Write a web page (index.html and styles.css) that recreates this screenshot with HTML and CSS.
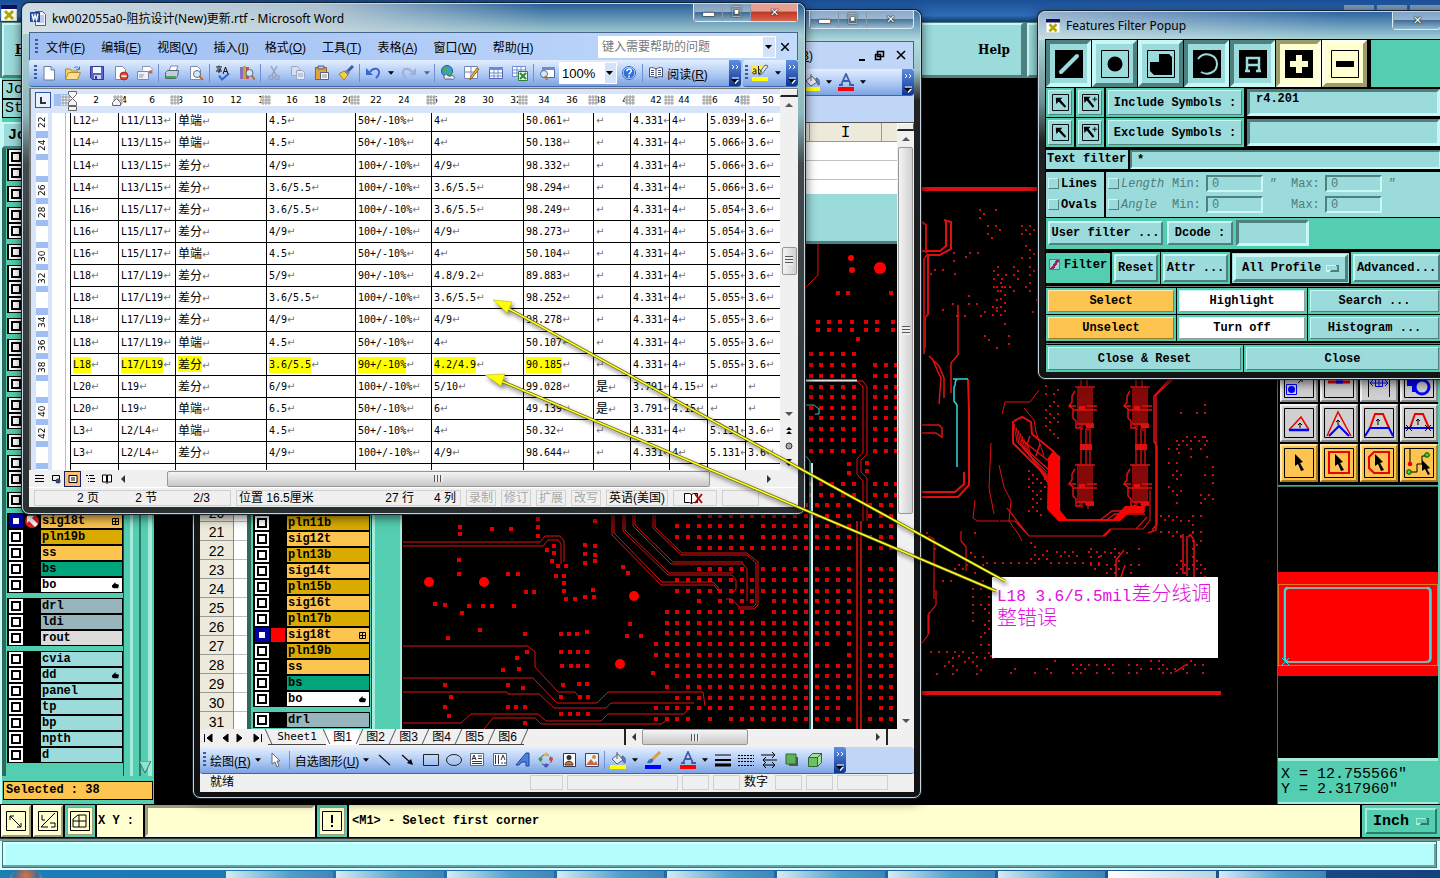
FILE: index.html
```html
<!DOCTYPE html>
<html lang="zh-CN">
<head>
    <meta charset="UTF-8">
    <meta name="viewport" content="width=device-width, initial-scale=1.0">
    <title>kw002055a0-阻抗设计(New)更新.rtf - Microsoft Word</title>
    <link rel="stylesheet" href="styles.css">
</head>
<body>
    <!-- icon sprite -->
    <svg width="0" height="0" class="sprite" aria-hidden="true">
        <symbol id="i-new" viewBox="0 0 16 16"><path d="M3 1.500h7l3.500 3.500v10H3z" fill="#fff" stroke="#6a7c9c"/><path d="M10 1.500V5h3.500" fill="#cdd8ec" stroke="#6a7c9c"/></symbol>
        <symbol id="i-open" viewBox="0 0 16 16"><path d="M.5 14V4h5l1 2h6v3" fill="#f6cf6b" stroke="#b58a26"/><path d="M.5 14.500l3-7h12l-3 7z" fill="#fbdf8d" stroke="#b58a26"/><path d="M9 3c2-2 4-1 5 1m.5-2.500V4.500h-3" fill="none" stroke="#3b6fc4"/></symbol>
        <symbol id="i-save" viewBox="0 0 16 16"><path d="M1.500 1.500h13v13h-11l-2-2z" fill="#5a62c8" stroke="#33398e"/><path d="M4 2h8v6H4z" fill="#f3f5ff"/><path d="M5 10h7v4H5z" fill="#cdd2ee"/><path d="M6 11h2v3H6z" fill="#33398e"/></symbol>
        <symbol id="i-perm" viewBox="0 0 16 16"><path d="M2.500 1.500h7l3 3v10h-10z" fill="#fff" stroke="#7c8aa8"/><circle cx="11" cy="11" r="4" fill="#e2492f" stroke="#a52a18"/><path d="M8.500 10.300h5v1.600h-5z" fill="#fff"/></symbol>
        <symbol id="i-mail" viewBox="0 0 16 16"><path d="M5.500 5V1.500H13l2 2V9" fill="#fff" stroke="#8a96b0"/><path d="M.5 6.500h11v8H.5z" fill="#eef1f8" stroke="#7c8aa8"/><path d="M2 10h5m-5 2h4" stroke="#8a96b0"/><path d="M12 5.500h3v3h-3z" fill="#e05646"/></symbol>
        <symbol id="i-print" viewBox="0 0 16 16"><path d="M5 6l2-5h7l-2 5z" fill="#fff" stroke="#7c8aa8"/><path d="M1.500 7.500l2-2h11l-1 6-2 2h-10z" fill="#c5cddd" stroke="#56617a"/><path d="M2 11h10v2H2z" fill="#38b24a"/></symbol>
        <symbol id="i-preview" viewBox="0 0 16 16"><path d="M2.500 1.500h7l3 3v10h-10z" fill="#fff" stroke="#7c8aa8"/><circle cx="9" cy="9" r="3.500" fill="#d5ebfb" stroke="#5d6c88"/><path d="M11.500 11.500l3.500 3.500" stroke="#b96f2b" stroke-width="2"/></symbol>
        <symbol id="i-spell" viewBox="0 0 16 16"><path d="M1 2h6M4 .5V2M2 4h4L4 5.500V8M1 6h6M8 9l2.500-7L13 9M9 6.500h3" fill="none" stroke="#111"/><path d="M4 10.500l3 4 7-6" fill="none" stroke="#2f68c5" stroke-width="2"/></symbol>
        <symbol id="i-research" viewBox="0 0 16 16"><path d="M1 2h3v12H1z" fill="#8a6cc0"/><path d="M4 1h3v13H4z" fill="#c9a04a"/><path d="M7 2h3v12H7z" fill="#c0564a"/><circle cx="10.500" cy="8" r="3.500" fill="#cfe6fa" stroke="#5d6c88"/><path d="M12.500 10.500L16 15" stroke="#b96f2b" stroke-width="2"/></symbol>
        <symbol id="i-cut" viewBox="0 0 16 16"><path d="M5 1l5 9M11 1L6 10" stroke="#93a3bf" stroke-width="1.500"/><circle cx="5" cy="12.500" r="2" fill="none" stroke="#93a3bf" stroke-width="1.500"/><circle cx="11" cy="12.500" r="2" fill="none" stroke="#93a3bf" stroke-width="1.500"/></symbol>
        <symbol id="i-copy" viewBox="0 0 16 16"><path d="M1.500 1.500h6l2 2v7h-8z" fill="#d5dff0" stroke="#98a8c6"/><path d="M6.500 5.500h6l2 2v7h-8z" fill="#e2e9f6" stroke="#98a8c6"/><path d="M8 9h5m-5 2h5" stroke="#98a8c6"/></symbol>
        <symbol id="i-paste" viewBox="0 0 16 16"><path d="M1.500 2.500h11v12h-11z" fill="#e2a43a" stroke="#8f6518"/><path d="M4 1h6v3H4z" fill="#b9c0cd" stroke="#56617a"/><path d="M6.500 7.500h8v7h-8z" fill="#fff" stroke="#56617a"/><path d="M8 10h5m-5 2h5" stroke="#7c8aa8"/></symbol>
        <symbol id="i-brush" viewBox="0 0 16 16"><path d="M15 1l-6 6" stroke="#3c5ba9" stroke-width="3"/><path d="M1 9l5-3 4 4-4 5z" fill="#f5cd4f" stroke="#a98419"/><path d="M6 6l3-1 3 3-2 2z" fill="#7a8294"/></symbol>
        <symbol id="i-undo" viewBox="0 0 16 16"><path d="M5 7c3-5 10-4 9 1-.3 3-2 4-3 5" fill="none" stroke="#3b66cf" stroke-width="2"/><path d="M1 3v7h7z" fill="#3b66cf"/></symbol>
        <symbol id="i-redo" viewBox="0 0 16 16"><path d="M11 7C8 2 1 3 2 8c.3 3 2 4 3 5" fill="none" stroke="#9fb1d2" stroke-width="2"/><path d="M15 3v7H8z" fill="#9fb1d2"/></symbol>
        <symbol id="i-link" viewBox="0 0 16 16"><circle cx="7" cy="6" r="5.500" fill="#3f9bd8" stroke="#1d5e94"/><path d="M3 3c3-2 5 0 4 2s-2 3-4 2zM8 7c2-1 4 0 3 2s-3 1-3-2z" fill="#46b04a"/><path d="M4 12a2 2 0 014-1h3a2 2 0 110 3H7a2 2 0 01-3-2z" fill="#e8ecf5" stroke="#56617a"/></symbol>
        <symbol id="i-tabpen" viewBox="0 0 16 16"><path d="M.5 1.500h13v12H.5zM7 1v12M0 7h13" fill="#fff" stroke="#7485b2"/><path d="M15 4l-7 9-2 2 .5-3L13 3z" fill="#f0b740" stroke="#8f6518"/></symbol>
        <symbol id="i-table" viewBox="0 0 16 16"><path d="M1.500 2.500h13v11h-13z" fill="#fff" stroke="#4f68ad"/><path d="M1 2h14v3H1z" fill="#6f8bd2"/><path d="M2 8h12M2 11h12M6 3v10M10 3v10" stroke="#6f8bd2"/></symbol>
        <symbol id="i-xls" viewBox="0 0 16 16"><path d="M.5 1.500h13v10H.5zM5 2v9M9 2v9M1 5h12M1 8h12" fill="#fff" stroke="#6f8bd2"/><path d="M6.500 6.500h9v9h-9z" fill="#e9f7e7" stroke="#2f7d36"/><path d="M8 8l6 6M14 8l-6 6" stroke="#2f8d3a" stroke-width="2"/></symbol>
        <symbol id="i-map" viewBox="0 0 16 16"><path d="M3.500 2.500h12v10h-12z" fill="#fff" stroke="#4f68ad"/><path d="M3 2h13v3H3z" fill="#6f8bd2"/><circle cx="5" cy="9" r="3.500" fill="#d5ebfb" stroke="#5d6c88"/><path d="M6 11l2 4" stroke="#b96f2b" stroke-width="2"/></symbol>
        <symbol id="i-help" viewBox="0 0 16 16"><circle cx="8" cy="8" r="6.500" fill="#fff" stroke="#2c62c4"/><circle cx="8" cy="8" r="5.500" fill="#2f6fdb"/><path d="M5.800 6.200c0-3 4.500-3 4.500-.2C10.300 7.600 8 7.600 8 9.500M8 10.800v1.600" fill="none" stroke="#fff" stroke-width="1.500"/></symbol>
        <symbol id="i-book" viewBox="0 0 16 16"><path d="M1.500 3c3-1 5 0 6.500 1 1.500-1 3.500-2 6.500-1v9c-3-1-5 0-6.500 1-1.500-1-3.500-2-6.500-1zM8 4v9" fill="#fff" stroke="#44506c"/><path d="M3 5.500h3M3 7.500h3M3 9.500h3M10 5.500h3M10 7.500h3M10 9.500h3" stroke="#44506c"/></symbol>
        <symbol id="i-doc" viewBox="0 0 16 16"><path d="M5.500 1.500h7l3 3v11h-10z" fill="#eef3fc" stroke="#56617a"/><path d="M8 6h6M8 8h6M8 10h6M8 12h6" stroke="#8fa4cf"/><path d="M.5 2.500h9v9h-9z" fill="#3460b8" stroke="#1b3c83"/><path d="M2 4l1.500 6L5 5l1.500 5L8 4" fill="none" stroke="#fff" stroke-width="1.300"/></symbol>
        <symbol id="i-hilite" viewBox="0 0 18 18"><path d="M1 1h11v9H1z" fill="#ffe94d"/><path d="M17 2l-6 8-3 1 1-3 5-7z" fill="#e8ecf5" stroke="#56617a"/><path d="M2 5.500c1-1 3-1 3 1V10M5 7C1 7 1 10 3 10l2-1M7.500 2v8M7.500 6c3-1.500 4 4 0 4" fill="none" stroke="#222"/><path d="M1 13h16v4H1z" fill="#ffff00"/></symbol>
        <symbol id="i-fill" viewBox="0 0 18 18"><path d="M3 8l6-5 5 6-6 4z" fill="#e8ecf5" stroke="#56617a"/><path d="M8 1v7M13 5c3 0 4 4 3 7-2 0-2-3-3-5z" fill="#4f82cf" stroke="#56617a"/><path d="M1 14h16v4H1z" fill="#ffff00"/></symbol>
        <symbol id="i-pen" viewBox="0 0 18 18"><path d="M16 1l-8 8" stroke="#dba03d" stroke-width="3"/><path d="M3 12c1-4 4-5 6-4 1 3-2 5-6 4z" fill="#3f6dc4"/><path d="M1 14h16v4H1z" fill="#0000ff"/></symbol>
        <symbol id="i-color" viewBox="0 0 18 18"><path d="M4 12L9 1l5 11M6 8h6M2 12h4M12 12h5" fill="none" stroke="#3d5ea8" stroke-width="1.800"/><path d="M1 14h16v4H1z" fill="#ff0000"/></symbol>
        <symbol id="i-caret" viewBox="0 0 7 4"><path d="M0 0h7L3.500 4z"/></symbol>
        <symbol id="i-cap" viewBox="0 0 12 26"><path d="M3 5l2 2-2 2M7 5l2 2-2 2" fill="none" stroke="#fff"/><path d="M3 18h7" stroke="#fff"/><path d="M3 20h7l-3.500 4z" fill="#fff"/><path d="M2 19h7l-3.500 4z" fill="#000"/></symbol>
        <symbol id="i-x11" viewBox="0 0 16 16"><path d="M0 0h16v16H0z" fill="#ddd"/><path d="M1 2h14v13H1z" fill="#fff"/><path d="M0 0h16v4H0z" fill="#101060"/><path d="M4 6l8 8M12 6l-8 8" stroke="#b0a800" stroke-width="3"/></symbol>
        <symbol id="i-arrow" viewBox="0 0 18 18"><path d="M.5.500h17v17H.5z" fill="none" stroke="#000"/><path d="M4 4h7L9 6l6 7-1.500 1.500L7 8l-2.500 2.500z"/></symbol>
        <symbol id="i-arrowplus" viewBox="0 0 18 18"><path d="M.5.500h17v17H.5z" fill="none" stroke="#000"/><path d="M2 3h7L7 5l6 8-1.500 1.500L5 7l-2.500 2.500z"/><path d="M13.500 3v5M11 5.500h5" stroke="#000"/></symbol>
        <symbol id="i-hash" viewBox="0 0 10 10"><path d="M0 0h10v10H0z" fill="#fff" fill-opacity=".8"/><path d="M2 0v10M5 0v10M8 0v10M0 2h10M0 5h10M0 8h10" stroke="#999"/></symbol>
        <symbol id="i-hand" viewBox="0 0 8 8"><path d="M0 4l4-4v2l4 1-1 4H2L0 6z"/></symbol>
        <symbol id="i-plusbox" viewBox="0 0 7 7"><path d="M.5.500h6v6h-6zM3.500 1v5M1 3.500h5" fill="none" stroke="#000"/></symbol>
    </svg>

    <div class="desktop">
        <!-- CAM application -->
        <div class="cam">
            <header class="cam-title">
                <svg class="cam-icon"><use href="#i-x11"/></svg>
                <span class="ghost-btns"><i></i><i></i><i></i></span>
            </header>
            <nav class="cam-menu">
                <button class="menu-file"><u>F</u>ile</button>
                <button class="menu-help">Help</button>
                <div class="menu-clock"></div>
            </nav>
            <main class="cam-main">
                <aside class="layers-panel">
                    <div class="job-fields">
                        <span>Jo</span><span>St</span>
                        <button class="bevel">Jo</button>
                    </div>
                    <div class="layers-body">
                        <div class="layers" id="layers"></div>
                        <div class="cam-scroll"><svg viewBox="0 0 12 12"><path d="M0 0h12L6 12z" fill="#8fe3d0" stroke="#2d7a68"/></svg></div>
                    </div>
                    <div class="selected">Selected : 38</div>
                </aside>
                <section class="canvas"><svg id="board" width="1123" height="727" viewBox="154 78 1123 727"></svg></section>
                <aside class="tools-panel">
                    <div class="tools">
                        <button><svg viewBox="0 0 30 30"><path d="M.5.500h29v29H.5z" fill="none" stroke="#000"/><path d="M2.500 16.500h10v10h-10z" fill="none" stroke="#00f"/><circle cx="7.500" cy="21.500" r="3.500" fill="#00f"/><path d="M14 15l4-4m-3 0h3v3" fill="none" stroke="#000"/></svg></button>
                        <button><svg viewBox="0 0 30 30"><path d="M.5.500h29v29H.5z" fill="none" stroke="#000"/><path d="M4 14h22" stroke="#e00" stroke-width="3"/><path d="M12 14h7" stroke="#00f" stroke-width="3"/></svg></button>
                        <button><svg viewBox="0 0 30 30"><path d="M4.500 29V8M25.500 29V8" stroke="#000"/><path d="M6 15h18M9 12l-3 3 3 3M21 12l3 3-3 3M11.500 11.500h7v7h-7zM15 11v8" fill="none" stroke="#00f"/></svg></button>
                        <button><svg viewBox="0 0 30 30"><path d="M.5.500h29v29H.5z" fill="none" stroke="#000"/><path d="M3 10h14v14H8V18H3z" fill="#00f"/><circle cx="18" cy="19" r="7" fill="#d0d0d0" stroke="#00f" stroke-width="3"/></svg></button>
                        <button><svg viewBox="0 0 30 30"><path d="M.5.500h29v29H.5z" fill="none" stroke="#000"/><path d="M5 22L17 9l8 13" fill="none" stroke="#e00" stroke-width="1.500"/><path d="M5 22h20" stroke="#00f" stroke-width="2.500"/><path d="M16 20v-5m-2 2l2-2 2 2" fill="none" stroke="#000"/></svg></button>
                        <button><svg viewBox="0 0 30 30"><path d="M.5.500h29v29H.5z" fill="none" stroke="#000"/><path d="M3 28L14 4l13 24" fill="none" stroke="#e00" stroke-width="1.500"/><path d="M5 28l10-10 10 10" fill="none" stroke="#00f" stroke-width="2"/><path d="M14 17v-5m-2 2l2-2 2 2" fill="none" stroke="#000"/></svg></button>
                        <button><svg viewBox="0 0 30 30"><path d="M.5.500h29v29H.5z" fill="none" stroke="#000"/><path d="M6 20l5-14h8l6 14" fill="none" stroke="#e00" stroke-width="2"/><path d="M1 28l5-8h19l4 8" fill="none" stroke="#00f" stroke-width="2"/><path d="M14 17v-6m-2 2l2-2 2 2" fill="none" stroke="#000"/></svg></button>
                        <button><svg viewBox="0 0 30 30"><path d="M.5.500h29v29H.5z" fill="none" stroke="#000"/><path d="M6 20l5-14h8l6 14" fill="none" stroke="#e00" stroke-width="2"/><path d="M1 20h28" stroke="#00f" stroke-width="2"/><path d="M14 17v-6m-2 2l2-2 2 2M2 17l6 6m0-6l-6 6M21 17l6 6m0-6l-6 6" fill="none" stroke="#000"/></svg></button>
                        <button class="amber"><svg viewBox="0 0 30 30"><path d="M.5.500h29v29H.5z" fill="none" stroke="#000"/><path d="M11 6l8 8-3 1 4 7-3 1-3-7-3 2z"/></svg></button>
                        <button class="amber"><svg viewBox="0 0 30 30"><path d="M.5.500h29v29H.5z" fill="none" stroke="#000"/><path d="M5 4h20v21H5z" fill="none" stroke="#e00" stroke-width="2"/><path d="M11 6l8 8-3 1 4 7-3 1-3-7-3 2z"/></svg></button>
                        <button class="amber"><svg viewBox="0 0 30 30"><path d="M.5.500h29v29H.5z" fill="none" stroke="#000"/><path d="M10 4h15v21H10l-5-5V9z" fill="none" stroke="#e00" stroke-width="2"/><path d="M11 6l8 8-3 1 4 7-3 1-3-7-3 2z"/></svg></button>
                        <button class="amber"><svg viewBox="0 0 30 30"><path d="M.5.500h29v29H.5z" fill="none" stroke="#000"/><path d="M6 1v14M6 24h7v-8h5V8h5" fill="none" stroke="#000"/><circle cx="6" cy="16" r="2.300" fill="#e00"/><circle cx="5" cy="24" r="2.300" fill="#3d3" stroke="#040"/><circle cx="23" cy="7" r="2.300" fill="#3d3" stroke="#040"/><path d="M18 12l8 8-3 1 3 5-2 1-3-6-3 2z"/></svg></button>
                    </div>
                    <div class="overview">
                        <svg width="160" height="104" viewBox="0 0 160 104">
                            <path d="M0 0h160v104H0z" fill="#f00"/>
                            <path d="M1 12.500h158M1 93.500h158M.5 12v82M159.500 12v82" stroke="#e07820"/>
                            <rect x="7" y="16" width="145" height="74" rx="4" fill="none" stroke="#9aa" stroke-width="2"/>
                            <path d="M10 15.500q-3.500 0-3.500 4V86q0 4 3.500 4M149 15.500q4 0 4 4V86q0 4-4 4" fill="none" stroke="#2be0e6" stroke-width="1.500"/>
                            <path d="M4 86l7 7m0-7l-7 7" stroke="#2be0e6"/>
                        </svg>
                    </div>
                    <output class="coords">X = 12.755566"<br>Y = 2.317960"</output>
                </aside>
            </main>
            <section class="command">
                <button class="cmd"><svg viewBox="0 0 20 20"><path d="M.5.500h19v19H.5zM4 5l11 11M4 9V5h4M15 12v4h-4" fill="none" stroke="#000"/></svg></button>
                <button class="cmd"><svg viewBox="0 0 20 20"><path d="M.5.500h19v19H.5zM17 2L3 16h7M4 4v5h3M12 12h5v4h-4" fill="none" stroke="#000"/></svg></button>
                <button class="cmd green"><svg viewBox="0 0 20 20"><path d="M.5.500h19v19H.5zM3 16V8l5-4h8v12zM9 4v12M3 10h13" fill="none" stroke="#000"/></svg></button>
                <label class="xy" for="xy">X Y :</label>
                <input id="xy" class="xy-input" type="text">
                <button class="cmd green"><svg viewBox="0 0 20 20"><path d="M.5.500h19v19H.5z" fill="none" stroke="#000"/><path d="M10 4v8M10 14v2" stroke="#000" stroke-width="2"/></svg></button>
                <p class="prompt">&lt;M1&gt; - Select first corner</p>
                <div class="unit">
                    <select aria-label="Unit"><option>Inch</option><option>MM</option></select>
                </div>
            </section>
            <div class="message"><input type="text" aria-label="Message"></div>
            <footer class="taskbar">
                <i class="orb"></i>
                <span></span><span></span><span></span><span></span><span></span><span></span><span></span><span></span><span class="lit"></span><span></span>
            </footer>
        </div>

        <!-- Excel -->
        <section class="window excel">
            <div class="win-title">
                <div class="win-btns"><button aria-label="Minimize">▬</button><button aria-label="Maximize">▣</button><button aria-label="Close">✕</button></div>
            </div>
            <div class="client">
                <div class="xl-menu">
                    <button>Adobe PDF(<u>B</u>)</button>
                    <svg width="52" height="12" viewBox="0 0 52 12"><path d="M2 10h6" stroke="#000" stroke-width="2"/><path d="M20.500 1.500h6v5h-6zM18.500 4.500h5v5h-5z" fill="#c0d6f6" stroke="#000" stroke-width="1.500"/><path d="M40 1l8 8M48 1l-8 8" stroke="#000" stroke-width="1.600"/></svg>
                </div>
                <div class="xl-bar">
                    <button><svg class="i18"><use href="#i-fill"/></svg></button><button class="drop"><svg><use href="#i-caret"/></svg></button>
                    <button><svg class="i18"><use href="#i-color"/></svg></button><button class="drop"><svg><use href="#i-caret"/></svg></button>
                    <svg class="cap"><use href="#i-cap"/></svg>
                </div>
                <div class="xl-blank"></div>
                <div class="xl-body">
                    <div class="sheet">
                        <div class="colhead"><span></span><span>I</span><span></span></div>
                        <div class="sheet-row">
                            <div class="rowheads" id="rowheads"></div>
                            <div class="sheet-gap"></div>
                            <div class="shot">
                                <div class="shot-top"></div>
                                <div class="shot-main">
                                    <div class="layers mini" id="layersMini"></div>
                                    <div class="shot-side"></div>
                                    <svg id="closeup" viewBox="402 243 495 485" preserveAspectRatio="xMinYMin slice"></svg>
                                </div>
                            </div>
                        </div>
                    </div>
                    <div class="vscroll">
                        <i class="split"></i>
                        <svg viewBox="0 0 16 16"><path d="M4 10h8L8 6z" fill="#555"/></svg>
                        <div class="thumb"><b></b></div>
                        <div class="track"></div>
                        <svg viewBox="0 0 16 16"><path d="M4 6h8l-4 4z" fill="#555"/></svg>
                    </div>
                </div>
                <div class="tabs">
                    <svg width="66" height="15" viewBox="0 0 66 15"><path d="M2.500 4v8M10 4v8L5 8zM26 4v8l-5-4zM35 4v8l5-4zM52 4v8l5-4zM59.500 4v8" stroke="#000" stroke-width="1"/></svg>
                    <button>Sheet1</button><button class="on">图1</button><button>图2</button><button>图3</button><button>图4</button><button>图5</button><button>图6</button><i class="tab-end"></i>
                    <div class="hscroll">
                        <svg viewBox="0 0 16 16"><path d="M10 4v8L6 8z" fill="#333"/></svg>
                        <div class="thumb"><b></b></div>
                        <svg class="end" viewBox="0 0 16 16"><path d="M6 4v8l4-4z" fill="#333"/></svg>
                    </div>
                </div>
                <div class="draw-bar">
                    <i class="grip"></i>
                    <button class="txt"><span>绘图(<u>R</u>)</span> <svg><use href="#i-caret"/></svg></button>
                    <button><svg viewBox="0 0 16 16"><path d="M4 1l8 8H9l2 5-2 1-2-5-3 2z" fill="#fff" stroke="#667"/></svg></button>
                    <i class="sep"></i>
                    <button class="txt"><span>自选图形(<u>U</u>)</span> <svg><use href="#i-caret"/></svg></button>
                    <button><svg viewBox="0 0 16 16"><path d="M2 3l11 10" stroke="#111" stroke-width="1.300"/></svg></button>
                    <button><svg viewBox="0 0 16 16"><path d="M2 3l9 8" stroke="#111" stroke-width="1.300"/><path d="M13 13l-6-2 4-4z"/></svg></button>
                    <button><svg viewBox="0 0 16 16"><path d="M.5 2.500h15v11H.5z" fill="none" stroke="#222"/></svg></button>
                    <button><svg viewBox="0 0 16 16"><ellipse cx="8" cy="8" rx="7.500" ry="5.500" fill="none" stroke="#222"/></svg></button>
                    <button><svg viewBox="0 0 16 16"><path d="M1.500 1.500h13v12h-13z" fill="#fff" stroke="#667"/><path d="M3 8l2-5 2 5M3.500 6.500h3M9 4h4M9 6.500h4M3 9.500h10M3 11.500h10" fill="none" stroke="#334"/></svg></button>
                    <button><svg viewBox="0 0 16 16"><path d="M1.500 1.500h13v12h-13z" fill="#fff" stroke="#667"/><path d="M9 8l2-5 2 5M3.500 3v9M6.500 3v9M10 10v2M13 10v2" fill="none" stroke="#334"/></svg></button>
                    <button><svg viewBox="0 0 16 16"><path d="M1 13L11 1h3v13h-3v-4H7l-3 3z" fill="#4d7fe0" stroke="#1c449c"/></svg></button>
                    <button><svg viewBox="0 0 16 16"><circle cx="8" cy="8" r="5.500" fill="none" stroke="#444" stroke-dasharray="3 2"/><circle cx="8" cy="2.500" r="2" fill="#e6b23c"/><circle cx="13" cy="7" r="2" fill="#d0483a"/><circle cx="8" cy="13.500" r="2" fill="#4a52c8"/><circle cx="2.500" cy="7" r="2" fill="#3e9a48"/></svg></button>
                    <button><svg viewBox="0 0 16 16"><path d="M2.500 1.500h12v13h-12z" fill="#fff" stroke="#335"/><circle cx="8" cy="5.500" r="2.500" fill="#333"/><path d="M4 13c0-5 8-5 8 0z" fill="#d87530" stroke="#333"/></svg></button>
                    <button><svg viewBox="0 0 16 16"><path d="M1.500 1.500h13v13h-13z" fill="#eaf2ff" stroke="#446"/><circle cx="10" cy="5" r="2" fill="#e08a2e"/><path d="M2 13l5-6 3 4 2-2 2 4z" fill="#c26a4b"/></svg></button>
                    <i class="sep"></i>
                    <button><svg class="i18"><use href="#i-fill"/></svg></button><button class="drop"><svg><use href="#i-caret"/></svg></button>
                    <button><svg class="i18"><use href="#i-pen"/></svg></button><button class="drop"><svg><use href="#i-caret"/></svg></button>
                    <button><svg class="i18"><use href="#i-color"/></svg></button><button class="drop"><svg><use href="#i-caret"/></svg></button>
                    <button><svg viewBox="0 0 16 16"><path d="M0 3h16" stroke="#000"/><path d="M0 8h16" stroke="#000" stroke-width="2"/><path d="M0 13h16" stroke="#000" stroke-width="3"/></svg></button>
                    <button><svg viewBox="0 0 16 16"><path d="M0 3.500h16M0 6.500h16M0 9.500h16M0 13.500h16" stroke="#000" stroke-dasharray="2 1"/></svg></button>
                    <button><svg viewBox="0 0 16 16"><path d="M0 3h14M11 0l3 3-3 3M2 8h14M5 5L2 8l3 3M2 13h12M11 10l3 3-3 3M5 10l-3 3 3 3" fill="none" stroke="#000"/></svg></button>
                    <button><svg viewBox="0 0 16 16"><path d="M5 5h9v9H5z" fill="#555"/><path d="M2 2h10v10H2z" fill="#5cb35a" stroke="#2d6c2d"/></svg></button>
                    <button><svg viewBox="0 0 16 16"><path d="M1.500 5.500h9v9h-9z" fill="#6cc067" stroke="#2d6c2d"/><path d="M1.500 5.500l4-4h9l-4 4zM10.500 14.500l4-4v-9l-4 4z" fill="#a4dd9c" stroke="#2d6c2d"/></svg></button>
                    <svg class="cap"><use href="#i-cap"/></svg>
                </div>
                <div class="xl-status">
                    <span class="ready">就绪</span>
                    <i class="w33"></i><i class="w110"></i><i></i><i></i><span class="num">数字</span><i></i><i></i><i class="w50"></i>
                </div>
            </div>
        </section>

        <!-- Word -->
        <section class="window word">
            <div class="win-title">
                <svg class="i16"><use href="#i-doc"/></svg>
                <h1>kw002055a0-阻抗设计(New)更新.rtf - Microsoft Word</h1>
                <div class="win-btns"><button aria-label="Minimize">▬</button><button aria-label="Maximize">▣</button><button class="red" aria-label="Close">✕</button></div>
            </div>
            <div class="client">
                <nav class="menu">
                    <i class="grip"></i>
                    <button>文件(<u>F</u>)</button><button>编辑(<u>E</u>)</button><button>视图(<u>V</u>)</button><button>插入(<u>I</u>)</button><button>格式(<u>O</u>)</button><button>工具(<u>T</u>)</button><button>表格(<u>A</u>)</button><button>窗口(<u>W</u>)</button><button>帮助(<u>H</u>)</button>
                    <div class="ask"><input type="text" placeholder="键入需要帮助的问题" aria-label="键入需要帮助的问题"><svg><use href="#i-caret"/></svg></div>
                    <button class="close-doc" aria-label="关闭"><svg width="8" height="8" viewBox="0 0 8 8"><path d="M0 0l8 8M8 0L0 8" stroke="#000" stroke-width="1.500"/></svg></button>
                </nav>
                <div class="bars">
                    <div class="bar">
                        <i class="grip"></i>
                        <button><svg><use href="#i-new"/></svg></button><button><svg><use href="#i-open"/></svg></button><button><svg><use href="#i-save"/></svg></button><button><svg><use href="#i-perm"/></svg></button><button><svg><use href="#i-mail"/></svg></button>
                        <i class="sep"></i>
                        <button><svg><use href="#i-print"/></svg></button><button><svg><use href="#i-preview"/></svg></button>
                        <i class="sep"></i>
                        <button><svg><use href="#i-spell"/></svg></button><button><svg><use href="#i-research"/></svg></button>
                        <i class="sep"></i>
                        <button><svg><use href="#i-cut"/></svg></button><button><svg><use href="#i-copy"/></svg></button><button><svg><use href="#i-paste"/></svg></button><button><svg><use href="#i-brush"/></svg></button>
                        <i class="sep"></i>
                        <button><svg><use href="#i-undo"/></svg></button><button class="drop"><svg><use href="#i-caret"/></svg></button><button><svg><use href="#i-redo"/></svg></button><button class="drop off"><svg><use href="#i-caret"/></svg></button>
                        <i class="sep"></i>
                        <button><svg><use href="#i-link"/></svg></button><button><svg><use href="#i-tabpen"/></svg></button><button><svg><use href="#i-table"/></svg></button><button><svg><use href="#i-xls"/></svg></button>
                        <i class="sep"></i>
                        <button><svg><use href="#i-map"/></svg></button>
                        <div class="zoom"><input type="text" value="100%" aria-label="显示比例"><svg><use href="#i-caret"/></svg></div>
                        <button><svg><use href="#i-help"/></svg></button>
                        <i class="sep"></i>
                        <button class="read"><svg><use href="#i-book"/></svg><span>阅读(<u>R</u>)</span></button>
                        <svg class="cap"><use href="#i-cap"/></svg>
                    </div>
                    <div class="bar small">
                        <i class="grip"></i>
                        <button><svg class="i18"><use href="#i-hilite"/></svg></button><button class="drop"><svg><use href="#i-caret"/></svg></button>
                        <svg class="cap"><use href="#i-cap"/></svg>
                    </div>
                </div>
                <div class="doc">
                    <div class="page">
                        <div class="hruler">
                            <button class="tabstop" aria-label="Tab"><svg width="14" height="14" viewBox="0 0 14 14"><path d="M5 4v6h5" fill="none" stroke="#333" stroke-width="2"/></svg></button>
                            <div class="hnums" id="hnums"></div>
                            <svg class="marks" id="marks" width="726" height="22" viewBox="52 90 726 22"></svg>
                        </div>
                        <div class="paper-row">
                            <div class="vruler" id="vruler"></div>
                            <div class="paper">
                                <table class="stack">
                                    <colgroup><col class="c48"><col class="c57"><col class="c91"><col class="c89"><col class="c76"><col class="c92"><col class="c70"><col class="c37"><col class="c39"><col class="c38"><col class="c38"><col></colgroup>
                                    <tbody id="rows"></tbody>
                                </table>
                            </div>
                        </div>
                    </div>
                    <div class="vscroll">
                        <i class="split"></i>
                        <svg viewBox="0 0 16 16"><path d="M4 10h8L8 6z" fill="#555"/></svg>
                        <div class="track"></div>
                        <div class="thumb"><b></b></div>
                        <div class="track rest"></div>
                        <svg viewBox="0 0 16 16"><path d="M4 6h8l-4 4z" fill="#555"/></svg>
                        <svg viewBox="0 0 16 16"><path d="M5 8l3-3 3 3zM5 12l3-3 3 3z"/></svg>
                        <svg viewBox="0 0 16 16"><circle cx="8" cy="8" r="3" fill="#aaa" stroke="#333"/></svg>
                        <svg viewBox="0 0 16 16"><path d="M5 5h6L8 8zM5 9h6l-3 3z"/></svg>
                    </div>
                </div>
                <div class="views">
                    <button><svg viewBox="0 0 12 12"><path d="M2 2.500h9M2 5.500h9M2 8.500h9" stroke="#000"/></svg></button>
                    <button><svg viewBox="0 0 12 12"><path d="M2.500 2.500h7v5h-7z" fill="none" stroke="#000"/><circle cx="8" cy="8" r="2.500" fill="#347"/></svg></button>
                    <button class="on"><svg viewBox="0 0 12 12"><path d="M2 2.500h8v7H2zM4 5h4M4 7h4" fill="#fff" stroke="#000"/></svg></button>
                    <button><svg viewBox="0 0 12 12"><path d="M2 2.500h2M5 2.500h5M4 5.500h1M6 5.500h5M4 8.500h1M6 8.500h5" stroke="#000"/></svg></button>
                    <button><svg viewBox="0 0 12 12"><path d="M1.500 2h4v7h-4zM6.500 2h4v7h-4zM6 9v2" fill="#fff" stroke="#000"/></svg></button>
                    <div class="hscroll">
                        <svg viewBox="0 0 16 16"><path d="M10 4v8L6 8z" fill="#333"/></svg>
                        <div class="thumb"><b></b></div>
                        <svg class="end" viewBox="0 0 16 16"><path d="M6 4v8l4-4z" fill="#333"/></svg>
                    </div>
                </div>
                <div class="w-status">
                    <div class="cell a"><span>2 页</span><span>2 节</span><span>2/3</span></div>
                    <div class="cell b"><span>位置 16.5厘米</span><span>27 行</span><span>4 列</span></div>
                    <div class="cell off">录制</div><div class="cell off">修订</div><div class="cell off">扩展</div><div class="cell off">改写</div>
                    <div class="cell">英语(美国)</div>
                    <div class="cell book"><svg width="20" height="12" viewBox="0 0 20 12"><path d="M.5 1.500h5l2 1 2-1h4v9h-4l-2 1-2-1h-5zM7.500 2v9" fill="#fff" stroke="#000"/><path d="M11 2l7 9M18 2l-7 9" stroke="#a11" stroke-width="2"/></svg></div>
                    <div class="cell empty"></div>
                </div>
            </div>
        </section>

        <!-- features filter -->
        <section class="window popup">
            <div class="win-title">
                <svg class="i16"><use href="#i-x11"/></svg>
                <h2>Features Filter Popup</h2>
                <div class="win-btns"><button aria-label="Close">✕</button></div>
            </div>
            <form class="client filter">
                <div class="types">
                    <button type="button" class="in"><svg viewBox="0 0 28 28"><path d="M0 0h28v28H0z"/><path d="M6 22L22 6" stroke="#9bdbdb" stroke-width="4" stroke-linecap="round"/></svg></button>
                    <button type="button"><svg viewBox="0 0 28 28"><path d="M.5.500h27v27H.5z" fill="none" stroke="#000"/><circle cx="14" cy="14" r="7.500"/></svg></button>
                    <button type="button"><svg viewBox="0 0 28 28"><path d="M.5.500h27v27H.5z" fill="none" stroke="#000"/><path d="M3 12h9V4h10l3 3v18H7l-4-4z"/></svg></button>
                    <button type="button" class="in"><svg viewBox="0 0 28 28"><path d="M0 0h28v28H0z"/><path d="M5 9C11 1 24 4 24 14c0 8-9 12-16 8" fill="none" stroke="#9bdbdb" stroke-width="2"/></svg></button>
                    <button type="button" class="in"><svg viewBox="0 0 28 28"><path d="M0 0h28v28H0z"/><path d="M8 22V8h12v14M8 15h12M6 21h5M17 21h5" fill="none" stroke="#9bdbdb" stroke-width="2.500"/></svg></button>
                    <button type="button" class="in cream"><svg viewBox="0 0 28 28"><path d="M0 0h28v28H0z"/><path d="M14 5v18M5 14h18" stroke="#ffffd0" stroke-width="6"/></svg></button>
                    <button type="button" class="cream"><svg viewBox="0 0 28 28"><path d="M.5.500h27v27H.5z" fill="none" stroke="#000"/><path d="M5 14h18" stroke="#000" stroke-width="6"/></svg></button>
                </div>
                <div class="sym">
                    <button type="button" class="pick"><svg><use href="#i-arrow"/></svg></button>
                    <button type="button" class="pick"><svg><use href="#i-arrowplus"/></svg></button>
                    <button type="button" class="symbtn">Include Symbols :</button>
                    <input type="text" aria-label="Include Symbols" value="r4.201">
                </div>
                <div class="sym">
                    <button type="button" class="pick"><svg><use href="#i-arrow"/></svg></button>
                    <button type="button" class="pick"><svg><use href="#i-arrowplus"/></svg></button>
                    <button type="button" class="symbtn">Exclude Symbols :</button>
                    <input type="text" aria-label="Exclude Symbols">
                </div>
                <div class="textfilter"><label for="tf">Text filter</label><input id="tf" type="text" value="*"></div>
                <div class="geom">
                    <div class="kinds">
                        <label><input type="checkbox">Lines</label>
                        <label><input type="checkbox">Ovals</label>
                    </div>
                    <div class="limits">
                        <label class="nm"><input type="checkbox" disabled>Length</label><label for="l1">Min:</label><input id="l1" type="text" value="0" disabled><em>"</em><label for="l2">Max:</label><input id="l2" type="text" value="0" disabled><em>"</em>
                        <label class="nm"><input type="checkbox" disabled>Angle</label><label for="a1">Min:</label><input id="a1" type="text" value="0" disabled><em></em><label for="a2">Max:</label><input id="a2" type="text" value="0" disabled><em></em>
                    </div>
                </div>
                <div class="user"><button type="button">User filter ...</button><button type="button" id="dc">Dcode :</button><input type="text" aria-label="Dcode"></div>
                <div class="profile">
                    <label class="flt"><input type="checkbox" checked>Filter</label>
                    <button type="button">Reset</button><button type="button">Attr ...</button>
                    <div class="sel"><select aria-label="Profile"><option>All Profile</option></select></div>
                    <button type="button" class="grow">Advanced...</button>
                </div>
                <div class="acts">
                    <button type="button" class="amber">Select</button><button type="button" class="white">Highlight</button><button type="button">Search ...</button>
                    <button type="button" class="amber">Unselect</button><button type="button" class="white">Turn off</button><button type="button">Histogram ...</button>
                </div>
                <div class="closes"><button type="button">Close &amp; Reset</button><button type="button">Close</button></div>
            </form>
        </section>

        <!-- callout -->
        <p class="note">L18 3.6/5.5mil<span>差分线调整错误</span></p>
        <svg class="callouts" width="1440" height="878" viewBox="0 0 1440 878">
            <g class="cast">
                <path d="M1005 581L500 304M996 591L494 378" stroke="#5f5f14" stroke-width="3"/>
                <path d="M1005 581L500 304M996 591L494 378" stroke="#ffff20" stroke-width="1.600"/>
                <path d="M493 300l19 2-5 11zM485 375l20-1-4 12z" fill="#ffff00" stroke="#b0b000" stroke-width=".5"/>
            </g>
        </svg>
    </div>
    <script src="script.js"></script>
</body>
</html>
```
FILE: styles.css
```css
* {
    margin: 0;
    padding: 0;
    box-sizing: border-box;
}

body {
    font-family: "Liberation Sans", "Noto Sans CJK SC", sans-serif;
    font-size: 12px;
    background: #000;
    overflow: hidden;
}

button, input, select {
    font: inherit;
    color: inherit;
    background: none;
    border: 0;
    border-radius: 0;
    outline: 0;
    appearance: none;
}

svg {
    display: block;
    flex: none;
}

.sprite {
    position: absolute;
}

.desktop {
    position: relative;
    height: 100vh;
    overflow: hidden;
}

/* CAM application */
.cam {
    height: 100%;
    display: flex;
    flex-direction: column;
    font-family: "Liberation Mono", "Noto Sans CJK SC", monospace;
    font-weight: bold;
}

.cam-title {
    height: 22px;
    flex: none;
    display: flex;
    justify-content: space-between;
    padding: 5px 0 0 1px;
    background: linear-gradient(#1b4f96, #2e6cb5 70%, #123a6c);
}

.cam-icon {
    width: 15px;
    height: 14px;
}

.ghost-btns {
    display: flex;
    gap: 3px;
}

.ghost-btns i {
    width: 30px;
    height: 10px;
    background: #7d97b5;
}

.cam-menu {
    height: 56px;
    flex: none;
    display: flex;
    background: #4f8080;
    gap: 4px;
    padding: 1px 0 1px 2px;
    font-family: "DejaVu Serif", serif;
}

.cam-menu > * {
    background: #9bdbdb;
    border: 2px solid;
    border-color: #c8f8f5 #4f8080 #4f8080 #c8f8f5;
}

.menu-file {
    width: 150px;
    text-align: left;
    padding-left: 11px;
}

.menu-help {
    flex: 1;
    text-align: right;
    padding-right: 11px;
}

.menu-clock {
    width: 413px;
}

.cam-main {
    flex: 1;
    min-height: 0;
    display: flex;
}

.layers-panel {
    width: 154px;
    display: flex;
    flex-direction: column;
    background: #54ceb0;
    border-left: 2px solid #c8f8f5;
}

.job-fields {
    height: 71px;
    flex: none;
    display: flex;
    flex-direction: column;
    padding-top: 2px;
    border-bottom: 1px solid #2d7a68;
}

.job-fields span {
    height: 19px;
    padding-left: 2px;
    font-size: 15px;
    line-height: 17px;
    background: #9bdbdb;
    border: 1px solid #000;
    font-weight: normal;
}

.job-fields button {
    margin-top: 4px;
    height: 26px;
    font-size: 15px;
    text-align: left;
    padding-left: 4px;
    background: #9bdbdb;
    border: 2px solid;
    border-color: #c8f8f5 #4f8080 #4f8080 #c8f8f5;
}

.layers-body {
    flex: 1;
    min-height: 0;
    display: flex;
    gap: 3px;
}

.layers {
    width: 122px;
    padding-left: 5px;
    display: flex;
    flex-direction: column;
    gap: 5px;
    background: linear-gradient(90deg, #2d6a5b 4px, #54ceb0 4px);
    border-right: 1px solid #1d4a3f;
}

.layer-group {
    background: #000;
    padding-right: 1px;
}

.layer {
    height: 16px;
    display: flex;
    align-items: center;
    padding-left: 2px;
}

.layer input {
    width: 14px;
    height: 14px;
    background: #fff;
    border: 2px solid #fff;
    box-shadow: inset 0 0 0 2px #000;
}

.layer input:checked {
    border-color: #0000a8;
    box-shadow: inset 0 0 0 2px #0000a8;
}

.layer .swatch {
    width: 14px;
    height: 14px;
    margin: 0 2px;
}

.layer .swatch svg {
    width: 14px;
    height: 14px;
}

.layer label {
    flex: 1;
    height: 14px;
    display: flex;
    align-items: center;
    justify-content: space-between;
    padding: 0 3px 0 1px;
    line-height: 14px;
}

.layer label svg {
    width: 7px;
    height: 7px;
}

.sig { background: #fdc54f; }
.pln { background: #d9aa00; }
.bs { background: #00a57c; }
.wht { background: #fff; }
.drl { background: #98b4bc; }
.gry { background: #dcdcdc; }
.aqua { background: #9bdbdb; }

.cam-scroll {
    flex: 1;
    display: flex;
    align-items: flex-end;
    padding-bottom: 3px;
    margin-left: 3px;
    margin-right: 2px;
    background: linear-gradient(90deg, #a5ecdc 3px, #54ceb0 3px 9px, #2d7a68 9px 11px, #54ceb0 11px 18px, #a5ecdc 18px);
}

.cam-scroll svg {
    width: 12px;
    height: 12px;
    margin-left: 9px;
}

.selected {
    height: 19px;
    flex: none;
    margin: 5px 1px 4px;
    padding-left: 2px;
    line-height: 17px;
    background: #fdc54f;
    border: 1px solid #000;
}

.canvas {
    flex: 1;
    min-width: 0;
    overflow: hidden;
    background: #000;
}

.tools-panel {
    width: 163px;
    display: flex;
    flex-direction: column;
    border-left: 1px solid #2d7a68;
    border-right: 2px solid #54ceb0;
}

.tools {
    height: 408px;
    flex: none;
    display: grid;
    grid-template-columns: repeat(4, 1fr);
    grid-auto-rows: 40px;
    align-content: end;
    padding: 0 0 2px 1px;
    border-bottom: 1px solid #888;
}

.tools button {
    margin: 1px;
    padding: 2px;
    background: #d0d0d0;
    border: 2px solid;
    border-color: #f2f2f2 #8a8a8a #8a8a8a #f2f2f2;
}

.tools .amber {
    background: #fdc54f;
    border-color: #ffe9ae #a87c1e #a87c1e #ffe9ae;
}

.tools svg {
    width: 30px;
    height: 30px;
}

.overview {
    flex: 1;
    padding-top: 85px;
    border-top: 1px solid #2d7a68;
}

.overview svg {
    width: 100%;
}

.coords {
    flex: none;
    padding: 6px 3px 5px;
    font-size: 15px;
    line-height: 15px;
    font-weight: normal;
    background: #54ceb0;
    border-top: 3px solid #a5ecdc;
    border-bottom: 2px solid #a5ecdc;
}

.command {
    height: 35px;
    flex: none;
    display: flex;
    gap: 2px;
    padding: 1px 0 1px 1px;
    border-bottom: 1px solid #333;
}

.cmd {
    width: 30px;
    padding: 3px;
    background: #ffffd0;
    border: 2px solid;
    border-color: #ffffe8 #9c9c7a #9c9c7a #ffffe8;
}

.cmd svg {
    width: 20px;
    height: 20px;
}

.cmd.green {
    background: #ffffd0;
    box-shadow: inset 0 0 0 1px #9c9c7a;
    border-color: #54ceb0;
}

.xy {
    width: 46px;
    padding-left: 1px;
    line-height: 32px;
    background: #ffffd0;
}

.xy-input {
    width: 170px;
    background: #ffffd0;
    border: 3px solid;
    border-color: #9c9c7a #ffffe8 #ffffe8 #9c9c7a;
}

.prompt {
    flex: 1;
    padding-left: 3px;
    line-height: 32px;
    background: #ffffd0;
}

.unit {
    width: 78px;
    padding: 3px;
    background: #54ceb0;
}

.unit select, .sel select {
    width: 100%;
    height: 100%;
    border: 2px solid;
    background: linear-gradient(#54ceb0, #54ceb0) right 8px center / 10px 4px no-repeat,
        linear-gradient(135deg, #a5ecdc 50%, #2d7a68 50%) right 6px center / 13px 7px no-repeat, #54ceb0;
    border-color: #a5ecdc #2d7a68 #2d7a68 #a5ecdc;
}

.unit select {
    font-size: 15px;
    padding-left: 6px;
}

.message {
    height: 31px;
    flex: none;
    padding: 2px 3px 2px 2px;
    background: linear-gradient(#6f9a98 2px, #d8ffff 2px);
}

.message input {
    display: block;
    width: 100%;
    height: 100%;
    background: #b5fcfd;
    border: 1px solid #3f7476;
    box-shadow: inset 0 2px #d8ffff, inset 0 -2px #6f9fa0, inset -2px 0 #6f9fa0, inset 3px 0 #d8ffff;
}

.taskbar {
    height: 8px;
    flex: none;
    display: flex;
    gap: 3px;
    overflow: hidden;
    padding-right: 114px;
    background: linear-gradient(90deg, #1b7fb5, #2463a5 60%, #14427e);
}

.taskbar span {
    flex: 1;
    margin-top: 1px;
    background: linear-gradient(90deg, #d5ecf5, #4f9fca 60%, #3f86b8);
}

.taskbar .lit {
    background: linear-gradient(90deg, #fff, #b5d3e4);
}

.orb {
    width: 34px;
    height: 34px;
    margin: -4px 180px 0 9px;
    border-radius: 50%;
    background: radial-gradient(circle at 50% 30%, #e0733a, #3f6d9b 40%, #c9dfe9);
}

/* shared window chrome */
.window {
    position: absolute;
    display: flex;
    flex-direction: column;
    border: 1px solid #c5d5dd;
    border-radius: 7px;
    box-shadow: 0 0 0 1px #16222c, 0 3px 12px rgba(0, 0, 0, 0.7);
}

.win-title {
    height: 28px;
    flex: none;
    display: flex;
    align-items: center;
    padding-left: 5px;
}

.win-title h1, .win-title h2 {
    flex: 1;
    padding-left: 6px;
    font-family: "Noto Sans", "Noto Sans CJK SC", sans-serif;
    font-size: 12px;
    font-weight: normal;
    white-space: nowrap;
}

.win-btns {
    align-self: flex-start;
    margin-left: auto;
    display: flex;
    height: 18px;
    border: 1px solid #dfe9f0;
    border-top: 0;
    border-radius: 0 0 4px 4px;
}

.win-btns button {
    width: 28px;
    font-size: 11px;
    line-height: 15px;
    color: #fff;
    text-shadow: 0 0 1px #222, 0 0 1px #222, 0 0 2px #222;
    background: linear-gradient(rgba(255, 255, 255, 0.4) 45%, rgba(40, 60, 90, 0.3) 50%, rgba(255, 255, 255, 0.2));
    border-left: 1px solid #8799ab;
}

.win-btns button:last-child {
    width: 47px;
}

.win-btns .red {
    background: linear-gradient(#e3a094 40%, #bf3a25 50%, #d8654f);
}

.client {
    flex: 1;
    min-height: 0;
    display: flex;
    flex-direction: column;
    overflow: hidden;
}

.i16, .cam-title svg {
    width: 16px;
    height: 16px;
}

.grip {
    width: 3px;
    height: 16px;
    flex: none;
    background: repeating-linear-gradient(#3c5a9c 0 2px, transparent 2px 4px);
}

.sep {
    width: 1px;
    height: 18px;
    margin: 0 1px;
    flex: none;
    background: #6f8fd0;
}

.cap {
    width: 12px;
    height: 100%;
    margin-left: auto;
    background: linear-gradient(#5f8fe0, #0b3596);
    border-radius: 0 3px 3px 0;
}

.i18 {
    width: 18px;
    height: 18px;
}

.vscroll {
    width: 18px;
    flex: none;
    display: flex;
    flex-direction: column;
    align-items: center;
    background: #f0f0f0;
}

.vscroll > svg {
    width: 16px;
    height: 16px;
}

.split {
    width: 100%;
    height: 8px;
    flex: none;
    background: #eee;
    border: 1px solid #fff;
    border-right-color: #555;
    border-bottom: 2px solid #222;
}

.track {
    flex: 1;
}

.thumb {
    display: flex;
    align-items: center;
    justify-content: center;
    border: 1px solid #979797;
    border-radius: 2px;
}

.vscroll .thumb {
    width: 15px;
    background: linear-gradient(90deg, #f4f4f4, #cfcfcf);
}

.vscroll .thumb b {
    width: 8px;
    height: 9px;
    background: repeating-linear-gradient(#555 0 1px, #eee 1px 3px);
}

.hscroll {
    flex: 1;
    height: 16px;
    display: flex;
    background: #f0f0f0;
}

.hscroll svg {
    width: 16px;
    height: 16px;
}

.hscroll .thumb {
    background: linear-gradient(#f4f4f4, #c9c9c9);
}

.hscroll .thumb b {
    width: 9px;
    height: 7px;
    background: repeating-linear-gradient(90deg, #555 0 1px, #eee 1px 3px);
}

.hscroll .end {
    margin-left: auto;
}

/* Word */
.word {
    left: 22px;
    top: 3px;
    width: 783px;
    height: 511px;
    padding: 0 6px 6px;
    background: linear-gradient(90deg, rgba(215, 226, 232, 0.95) 0, rgba(205, 218, 224, 0.8) 300px, rgba(160, 195, 205, 0.1) 520px) 0 0 / 100% 30px no-repeat,
        linear-gradient(#1d5594, #a5cfd2 30px, #8db8be 110px, #42494c 160px, #2a2f31);
}

.word .win-title {
    padding-left: 1px;
}

.menu {
    height: 28px;
    flex: none;
    display: flex;
    align-items: center;
    padding: 0 8px 0 5px;
    background: linear-gradient(90deg, #9fbef2, #c2dafc);
    border: 1px solid #46658c;
    border-bottom: 0;
}

.menu button {
    padding: 0 8px;
    font-size: 12px;
    white-space: nowrap;
}

.ask {
    width: 178px;
    height: 22px;
    flex: none;
    margin-left: auto;
    display: flex;
    align-items: center;
    background: linear-gradient(90deg, #fff 164px, #d5e3f8 164px);
    border: 1px solid #fff;
}

.ask input {
    width: 164px;
    padding-left: 3px;
}

.ask input::placeholder {
    color: #777;
}

.ask svg, .zoom svg {
    width: 7px;
    height: 4px;
    margin-left: 2px;
}

.menu .close-doc {
    padding: 0 0 0 5px;
}

.bars {
    height: 29px;
    flex: none;
    display: flex;
    gap: 2px;
    padding-bottom: 1px;
    background: #a9c5f3;
    border-bottom: 1px solid #7a7a7a;
}

.bar, .xl-bar, .draw-bar {
    display: flex;
    align-items: center;
    background: linear-gradient(#e3eefe, #a9c5f3 60%, #7ca3e2);
    border-bottom: 1px solid #3f66ad;
    border-radius: 3px;
}

.bar {
    flex: 1;
    padding-left: 5px;
}

.bar.small {
    flex: none;
    width: 55px;
    padding-left: 2px;
}

.bar button, .draw-bar button, .xl-bar button {
    width: 24px;
    flex: none;
    display: flex;
    align-items: center;
    justify-content: center;
}

.bar button svg {
    width: 16px;
    height: 16px;
}

.bar.small button svg {
    width: 18px;
    height: 18px;
}

.bar .drop, .draw-bar .drop, .xl-bar .drop {
    width: 12px;
}

.bar .drop svg, .bar.small .drop svg, .draw-bar .drop svg, .xl-bar .drop svg, .txt svg {
    width: 6px;
    height: 4px;
}

.off {
    opacity: 0.5;
}

.zoom {
    width: 58px;
    height: 22px;
    display: flex;
    align-items: center;
    background: linear-gradient(90deg, #fff 45px, #d5e3f8 45px);
    border: 1px solid #fff;
}

.zoom input {
    width: 44px;
    padding-left: 2px;
    font-size: 13px;
}

.bar .read {
    width: 68px;
    gap: 3px;
    white-space: nowrap;
}

.doc {
    flex: 1;
    min-height: 0;
    display: flex;
    background: #fff;
    border-left: 2px solid #777;
}

.page {
    flex: 1;
    min-width: 0;
    display: flex;
    flex-direction: column;
}

.hruler {
    position: relative;
    height: 24px;
    flex: none;
    display: flex;
    align-items: center;
    padding-bottom: 2px;
    background: #d7e4f9;
}

.tabstop {
    width: 16px;
    height: 16px;
    margin-left: 4px;
    border: 1px solid #2b57a5;
    background: #eaf1fc;
}

.hnums {
    flex: 1;
    height: 12px;
    display: flex;
    margin-left: 3px;
    padding-left: 28px;
    overflow: hidden;
    font-family: "DejaVu Sans", sans-serif;
    font-size: 9px;
    line-height: 12px;
    background: linear-gradient(90deg, #9fbef2 14px, #fff 14px);
}

.hnums span {
    width: 28px;
    flex: none;
    text-align: center;
}

.marks {
    position: absolute;
    left: 21px;
    top: 0;
}

.paper-row {
    flex: 1;
    min-height: 0;
    display: flex;
    overflow: hidden;
}

.vruler {
    width: 21px;
    display: flex;
    flex-direction: column;
    padding: 0 4px 0 5px;
    background: #d7e4f9;
}

.vruler span {
    height: 22px;
    flex: none;
    display: flex;
    align-items: center;
    justify-content: center;
    padding-bottom: 6px;
    font-family: "DejaVu Sans", sans-serif;
    font-size: 9px;
    line-height: 12px;
    writing-mode: vertical-rl;
    transform: rotate(180deg);
    background: linear-gradient(#fff 16px, #9fbef2 16px);
}

.vruler span:nth-child(8n+2) {
    height: 23px;
}

.vruler span:first-child {
    height: 18px;
    padding: 0;
    background: #fff;
}

.paper {
    flex: 1;
    min-width: 0;
    margin-left: 13px;
    padding-left: 4px;
    border-left: 1px solid #bbb;
    overflow: hidden;
}

.stack {
    width: 100%;
    margin-top: -4px;
    table-layout: fixed;
    border-collapse: collapse;
    font-family: "DejaVu Sans Mono", monospace;
    font-size: 10px;
}

.c48 { width: 48px; }
.c57 { width: 57px; }
.c91 { width: 91px; }
.c89 { width: 89px; }
.c76 { width: 76px; }
.c92 { width: 92px; }
.c70 { width: 70px; }
.c37 { width: 37px; }
.c39 { width: 39px; }
.c38 { width: 38px; }

.stack td {
    height: 22px;
    padding-left: 2px;
    line-height: 18px;
    white-space: nowrap;
    overflow: hidden;
    border: 1px solid #000;
    border-right: 0;
}

.stack tr:nth-child(8n+2) td {
    height: 23px;
}

.stack td.zh {
    font-family: "Noto Sans CJK SC", sans-serif;
    font-size: 12px;
}

.stack td::after {
    content: "↵";
    font-family: "DejaVu Sans", sans-serif;
    font-size: 10px;
    color: #777;
}

.stack mark {
    display: inline-block;
    height: 16px;
    line-height: 16px;
    background: #ffff00;
}

.word .vscroll .thumb {
    height: 28px;
    flex: none;
}

.word .vscroll .track {
    flex: 127;
}

.word .vscroll .rest {
    flex: 125;
}

.views {
    height: 17px;
    flex: none;
    display: flex;
    align-items: center;
    background: #f0f0f0;
    padding-left: 1px;
}

.views button {
    width: 17px;
    height: 16px;
    display: flex;
    align-items: center;
    justify-content: center;
}

.views .on {
    background: #fdbf70;
    border: 1px solid #1a1a6a;
}

.views button svg {
    width: 12px;
    height: 12px;
}

.word .hscroll {
    padding-right: 21px;
}

.word .hscroll .thumb {
    width: 543px;
    margin-left: 36px;
}

.w-status {
    height: 20px;
    flex: none;
    display: flex;
    gap: 5px;
    padding: 2px 0 1px 5px;
    white-space: nowrap;
    line-height: 15px;
    background: #f0f0f0;
    border-top: 1px solid #fff;
}

.cell {
    padding: 0 2px;
    display: flex;
    border: 1px solid #d0d0d0;
}

.cell.a {
    width: 197px;
    padding: 0 20px 0 42px;
    justify-content: space-between;
}

.cell.b {
    width: 225px;
    gap: 20px;
    padding-right: 4px;
}

.cell.b span:nth-child(2) {
    margin-left: auto;
}

.cell.off {
    opacity: 1;
    color: #a8a8a8;
}

.cell.book {
    width: 44px;
    padding: 1px 10px;
}

.cell.empty {
    width: 37px;
}

/* Excel */
.excel {
    left: 193px;
    top: 10px;
    width: 728px;
    height: 788px;
    padding: 0 6px 5px;
    background: linear-gradient(#3d6ea6, #b0dcdc 30px, #9cc3c8 60px, #222 90px, #111);
}

.excel .win-title {
    height: 30px;
}

.excel .client {
    background: #f0f0f0;
}

.xl-menu {
    height: 28px;
    flex: none;
    display: flex;
    align-items: center;
    justify-content: flex-end;
    gap: 44px;
    padding-right: 4px;
    font-size: 12px;
    background: #c0d6f6;
    border: 1px solid #46658c;
    border-bottom: 0;
}

.xl-bar {
    height: 27px;
    flex: none;
    justify-content: flex-end;
}

.xl-bar button {
    margin-right: -2px;
}

.xl-bar .cap {
    margin-left: 34px;
}

.xl-bar .drop {
    width: 14px;
}

.xl-blank {
    height: 27px;
    flex: none;
    background: #c0d6f6;
    border-bottom: 1px solid #555;
}

.xl-body {
    flex: 1;
    min-height: 0;
    display: flex;
}

.sheet {
    flex: 1;
    min-width: 0;
    display: flex;
    flex-direction: column;
    background: repeating-linear-gradient(#fff 0 18px, #c0c0c0 18px 19px);
    overflow: hidden;
}

.colhead {
    height: 19px;
    flex: none;
    display: flex;
    justify-content: flex-end;
    font-family: "Liberation Mono", monospace;
    font-size: 16px;
    line-height: 20px;
    background: #edeadb;
    border-bottom: 1px solid #999;
}

.colhead span {
    width: 72px;
    text-align: center;
    border-left: 1px solid #999;
}

.colhead span:last-child {
    width: 16px;
}

.sheet-row {
    flex: 1;
    min-height: 0;
    display: flex;
}

.rowheads {
    width: 34px;
    overflow: hidden;
    background: #edeadb;
    border-right: 1px solid #888;
}

.rowheads span {
    display: block;
    height: 19px;
    font-size: 14px;
    line-height: 20px;
    text-align: center;
    border-bottom: 1px solid #999;
}

.sheet-gap {
    width: 13px;
    flex: none;
}

.shot {
    flex: 1;
    min-width: 0;
    display: flex;
    flex-direction: column;
    padding-top: 52px;
}

.shot-top {
    height: 50px;
    flex: none;
    background: #9bdbdb;
    border-bottom: 3px solid #4f8080;
}

.shot-main {
    flex: 1;
    min-height: 0;
    display: flex;
    font-family: "Liberation Mono", monospace;
    font-weight: bold;
}

.layers.mini {
    width: 125px;
    padding: 0 1px 1px 6px;
    justify-content: flex-end;
    overflow: hidden;
    font-size: 12px;
}

.mini .layer {
    flex: none;
}

.shot-side {
    width: 30px;
    flex: none;
    background: linear-gradient(90deg, #a5ecdc 3px, #54ceb0 3px);
    border-right: 2px solid #a5ecdc;
}

#closeup {
    flex: 1;
    min-width: 0;
    height: 100%;
    background: #000;
}

.excel .vscroll {
    width: 17px;
}

.excel .vscroll .thumb {
    height: 367px;
    flex: none;
}

.tabs {
    height: 16px;
    flex: none;
    display: flex;
    align-items: center;
    padding-left: 2px;
    font-size: 12px;
    background: #f0f0f0;
}

.tabs button {
    position: relative;
    width: 33px;
    height: 16px;
    line-height: 14px;
    border-bottom: 1px solid #444;
    white-space: nowrap;
}

/* slanted tab edges */
.tabs button::before, .tab-end::before {
    content: "";
    position: absolute;
    left: 0;
    top: 0;
    width: 1px;
    height: 15px;
    background: #555;
    transform: skewX(-24deg);
}

.tabs button:first-of-type::before, .tabs .on::before {
    transform: skewX(24deg);
}

.tab-end {
    position: relative;
    width: 4px;
    height: 16px;
}

.tabs button:first-of-type {
    width: 58px;
    font-family: "DejaVu Sans Mono", monospace;
    font-size: 11px;
}

.tabs .on {
    background: #fff;
    border-bottom-color: #fff;
}

.tabs .hscroll {
    flex: none;
    width: 264px;
    margin: 0 26px 0 auto;
    border-left: 2px solid #222;
    border-right: 2px solid #222;
}

.tabs .thumb {
    width: 106px;
}

.draw-bar {
    height: 27px;
    flex: none;
    margin-top: 2px;
    padding-left: 3px;
    background: linear-gradient(#e3eefe, #a9c5f3 60%, #7ca3e2) 0 0 / 642px 100% no-repeat, #c0d6f6;
}

.draw-bar button {
    width: 23px;
}

.draw-bar button svg {
    width: 16px;
    height: 16px;
}

.draw-bar button .i18 {
    width: 18px;
    height: 18px;
}

.draw-bar .txt {
    width: auto;
    gap: 4px;
    padding: 0 4px;
    white-space: nowrap;
}

.draw-bar .txt svg {
    width: 6px;
    height: 4px;
}

.draw-bar .cap {
    margin-left: 8px;
}

.xl-status {
    height: 18px;
    flex: none;
    display: flex;
    gap: 4px;
    padding: 1px 26px 2px 10px;
    line-height: 15px;
}

.ready {
    flex: 1;
}

.xl-status i {
    width: 27px;
    border: 1px solid #d0d0d0;
}

.xl-status .w33 { width: 33px; }
.xl-status .w110 { width: 111px; }
.xl-status .w50 { width: 51px; }

.xl-status .num {
    width: 27px;
    white-space: nowrap;
}

/* features filter popup */
.popup {
    left: 1038px;
    right: -8px;
    top: 11px;
    padding: 0 6px 6px;
    background: linear-gradient(90deg, rgba(220, 230, 235, 0.6), rgba(170, 200, 205, 0)) 0 0 / 300px 28px no-repeat,
        linear-gradient(#2d64a4, #a8d4d6 28px, #6a8f94 90px, #222 130px, #141414);
    border-radius: 7px 0 0 7px;
}

.popup .win-title {
    height: 27px;
    padding-left: 0;
}

.popup .win-title svg {
    width: 16px;
    height: 14px;
}

.popup .win-title h2 {
    padding-left: 5px;
}

.filter {
    padding: 1px 0 0 1px;
    gap: 1px;
    background: #000;
    font-family: "Liberation Mono", monospace;
    font-size: 12px;
    font-weight: bold;
}

.filter button {
    background: #9bdbdb;
    border: 3px solid;
    border-color: #c8f8f5 #4f8080 #4f8080 #c8f8f5;
    outline: 2px solid #54ceb0;
    outline-offset: -1px;
    white-space: nowrap;
}

.filter input[type="text"] {
    flex: 1;
    min-width: 0;
    background: #9bdbdb;
    border: 3px solid;
    border-color: #4f8080 #c8f8f5 #c8f8f5 #4f8080;
}

.types {
    height: 47px;
    display: flex;
    gap: 1px;
    background: linear-gradient(90deg, #000 325px, #54ceb0 325px);
}

.filter .types button {
    width: 45px;
    padding: 4px;
    border-width: 4px;
    outline: 0;
    display: flex;
    align-items: center;
    justify-content: center;
}

.filter .types .in {
    border-color: #4f8080 #c8f8f5 #c8f8f5 #4f8080;
}

.filter .types .cream {
    background: #ffffd0;
    border-color: #ffffe8 #9c9c6a #9c9c6a #ffffe8;
}

.filter .types .cream.in {
    border-color: #9c9c6a #ffffe8 #ffffe8 #9c9c6a;
}

.types svg {
    width: 28px;
    height: 28px;
}

.sym {
    height: 29px;
    display: flex;
    gap: 4px;
    padding: 1px;
}

.sym button {
    border-width: 2px;
}

.pick {
    width: 26px;
    display: flex;
    align-items: center;
    justify-content: center;
}

.pick svg {
    width: 17px;
    height: 17px;
}

.symbtn {
    width: 136px;
}

.sym input[type="text"] {
    padding: 0 0 7px 6px;
}

.textfilter {
    height: 23px;
    display: flex;
    gap: 2px;
    padding: 2px 0;
}

.textfilter label {
    width: 82px;
    padding-left: 1px;
    line-height: 18px;
    white-space: nowrap;
    background: #9bdbdb;
}

.filter .textfilter input {
    padding-left: 5px;
    border-width: 2px;
}

.geom {
    height: 45px;
    display: flex;
    gap: 2px;
}

.kinds, .limits {
    background: #9bdbdb;
}

.kinds {
    width: 58px;
    padding: 1px 2px;
}

.geom label {
    display: flex;
    align-items: center;
    gap: 2px;
    height: 21px;
}

.geom input[type="checkbox"] {
    width: 11px;
    height: 11px;
    border: 1px solid;
    border-color: #c8f8f5 #4f8080 #4f8080 #c8f8f5;
}

.limits {
    flex: 1;
    display: grid;
    grid-template-columns: 64px 34px 57px 28px 34px 57px 1fr;
    grid-auto-rows: 21px;
    align-items: center;
    padding: 1px 2px;
    font-weight: normal;
    color: #4f7c7c;
}

.limits .nm {
    font-style: italic;
}

.filter .limits input[type="text"] {
    height: 17px;
    padding-left: 4px;
    border-width: 2px;
}

.limits em {
    padding-left: 6px;
}

.user {
    height: 31px;
    display: flex;
    gap: 2px;
    padding: 2px 132px 3px 1px;
    background: #54ceb0;
}

.user button {
    width: 117px;
}

#dc {
    width: 68px;
}

.profile {
    height: 34px;
    display: flex;
    gap: 3px;
    margin-top: 3px;
    padding-bottom: 3px;
    border-bottom: 1px solid #777;
}

.flt {
    width: 64px;
    display: flex;
    gap: 4px;
    padding: 5px 0 0 3px;
    background: #54ceb0;
}

.flt input {
    width: 11px;
    height: 11px;
    margin-top: 1px;
    border: 1px solid #4f8080;
    background: linear-gradient(125deg, #9bdbdb 42%, #a0205a 42% 64%, #9bdbdb 64%);
}

.profile button:nth-of-type(1) {
    width: 46px;
}

.profile button:nth-of-type(2) {
    width: 67px;
}

.profile .sel {
    width: 117px;
    padding: 1px;
    background: #9bdbdb;
}

.sel select {
    padding-left: 6px;
    background: linear-gradient(#9bdbdb, #9bdbdb) right 8px center / 10px 4px no-repeat,
        linear-gradient(135deg, #c8f8f5 50%, #4f8080 50%) right 6px center / 13px 7px no-repeat, #9bdbdb;
    border-width: 3px;
    border-color: #c8f8f5 #4f8080 #4f8080 #c8f8f5;
}

.profile .grow {
    flex: 1;
}

.acts {
    display: grid;
    grid-template-columns: 128px 128px 1fr;
    grid-auto-rows: 24px;
    gap: 3px;
    padding: 1px 1px 3px;
    border-bottom: 1px solid #777;
}

.acts button {
    border-width: 2px;
}

.acts .amber {
    background: #fdc54f;
    border-color: #ffe9ae #a87c1e #a87c1e #ffe9ae;
}

.acts .white {
    background: #fff;
    border-color: #c8f8f5 #999 #999 #c8f8f5;
}

.closes {
    height: 27px;
    display: grid;
    grid-template-columns: 1fr 1fr;
    gap: 3px;
    padding: 1px;
}

.closes button {
    border-width: 2px;
}

/* callout */
.note {
    position: absolute;
    left: 992px;
    top: 577px;
    width: 226px;
    height: 81px;
    padding: 6px 5px;
    font-family: "Liberation Mono", "Noto Sans CJK SC", monospace;
    font-size: 16px;
    line-height: 20px;
    color: #dd10dd;
    background: #fff;
}

.note span {
    font-family: "Noto Sans CJK SC", sans-serif;
    font-size: 20px;
    font-weight: 300;
}

.callouts {
    position: absolute;
    left: 0;
    top: 0;
    pointer-events: none;
}

.cast {
    filter: drop-shadow(2px 3px 2px rgba(0, 0, 0, 0.5));
}
```
FILE: script.js
```javascript
const $ = id => document.getElementById(id);

// ---- impedance table ----
const rows = [
    'L12|L11/L13|单端|4.5|50+/-10%|4|50.061||4.331|4|5.039|3.6',
    'L14|L13/L15|单端|4.5|50+/-10%|4|50.138||4.331|4|5.066|3.6',
    'L14|L13/L15|差分|4/9|100+/-10%|4/9|98.332||4.331|4|5.066|3.6',
    'L14|L13/L15|差分|3.6/5.5|100+/-10%|3.6/5.5|98.294||4.331|4|5.066|3.6',
    'L16|L15/L17|差分|3.6/5.5|100+/-10%|3.6/5.5|98.249||4.331|4|5.054|3.6',
    'L16|L15/L17|差分|4/9|100+/-10%|4/9|98.273||4.331|4|5.054|3.6',
    'L16|L15/L17|单端|4.5|50+/-10%|4|50.104||4.331|4|5.054|3.6',
    'L18|L17/L19|差分|5/9|90+/-10%|4.8/9.2|89.883||4.331|4|5.055|3.6',
    'L18|L17/L19|差分|3.6/5.5|100+/-10%|3.6/5.5|98.252||4.331|4|5.055|3.6',
    'L18|L17/L19|差分|4/9|100+/-10%|4/9|98.278||4.331|4|5.055|3.6',
    'L18|L17/L19|单端|4.5|50+/-10%|4|50.107||4.331|4|5.055|3.6',
    '*L18|L17/L19|差分|3.6/5.5|90+/-10%|4.2/4.9|90.185||4.331|4|5.055|3.6',
    'L20|L19|差分|6/9|100+/-10%|5/10|99.028|是|3.791|4.15||',
    'L20|L19|单端|6.5|50+/-10%|6|49.139|是|3.791|4.15||',
    'L3|L2/L4|单端|4.5|50+/-10%|4|50.32||4.331|4|5.131|3.6',
    'L3|L2/L4|差分|4/9|100+/-10%|4/9|98.644||4.331|4|5.131|3.6',
    '|||||||||||'
];
$('rows').innerHTML = rows.map(line => {
    const marked = line[0] === '*';
    const cells = line.replace('*', '').split('|');
    return '<tr>' + cells.map((c, i) => {
        const zh = /[\u4e00-\u9fff]/.test(c) ? ' class="zh"' : '';
        return `<td${zh}>${marked && i < 7 ? `<mark>${c}</mark>` : c}</td>`;
    }).join('') + '</tr>';
}).join('');

// ---- rulers ----
let nums = '';
for (let n = 2; n <= 50; n += 2) nums += `<span>${n}</span>`;
$('hnums').innerHTML = nums;
$('vruler').innerHTML = ['22', '24', '', '26', '28', '', '30', '32', '', '34', '36', '38', '', '40', '42', '', '']
    .map(n => `<span>${n}</span>`).join('');
$('marks').innerHTML = [66, 118, 175, 266, 355, 431, 523, 593, 630, 669, 707, 745]
    .map(x => `<use href="#i-hash" x="${x - 5}" y="96" width="10" height="10"/>`).join('')
    + '<path d="M68.500 92.500h8v3l-4 4-4-4zM68.500 106.500v-3l4-4 4 4v3zM68.500 107.500h8v4h-8zM112.500 106.500v-3l4-4 4 4v3z" fill="#f4f4f4" stroke="#666"/>';

// ---- layer lists ----
function layerList(el, groups, prefix) {
    let id = 0;
    el.innerHTML = groups.map(g => '<div class="layer-group">' + g.map(item => {
        const [name, cls, flag = '', sw = ''] = item.split(':');
        const key = prefix + id++;
        const icon = flag ? `<svg><use href="#i-${flag}"/></svg>` : '';
        let swatch = '';
        if (sw === 'red') swatch = '<svg viewBox="0 0 14 14"><path d="M0 0h14v14H0z" fill="#f00"/></svg>';
        if (sw === 'arrow') swatch = '<svg viewBox="0 0 14 14"><circle cx="7" cy="7" r="7" fill="#d22"/><path d="M2 2h7L7 4l6 6-3 3-6-6-2 2z" fill="#fff"/></svg>';
        return `<div class="layer"><input type="checkbox" id="${key}" ${sw ? 'checked' : ''}><span class="swatch">${swatch}</span><label class="${cls}" for="${key}">${name}${icon}</label></div>`;
    }).join('') + '</div>').join('');
}
const hidden = [2, 1, 2, 1, 3, 1, 2, 1, 2, 1, 2, 1].map(n => Array(n).fill(':sig'));
layerList($('layers'), hidden.concat([
    ['sig18t:sig:plusbox:arrow', 'pln19b:pln', 'ss:sig', 'bs:bs', 'bo:wht:hand'],
    ['drl:drl', 'ldi:drl', 'rout:gry'],
    ['cvia:aqua', 'dd:aqua:hand', 'panel:aqua', 'tp:aqua', 'bp:aqua', 'npth:aqua', 'd:aqua']
]), 'ly');
layerList($('layersMini'), [
    ['pln11b:pln', 'sig12t:sig', 'pln13b:pln', 'sig14t:sig', 'pln15b:pln', 'sig16t:sig', 'pln17b:pln',
        'sig18t:sig:plusbox:red', 'pln19b:pln', 'ss:sig', 'bs:bs', 'bo:wht:hand'],
    ['drl:drl']
], 'lm');

let heads = '';
for (let n = 1; n <= 31; n++) heads += `<span>${n}</span>`;
$('rowheads').innerHTML = heads;

// ---- board drawings ----
let seed = 7;
const rnd = () => (seed = (seed * 16807) % 2147483647) / 2147483647;
const sq = (x, y, s) => `M${x} ${y}h${s}v${s}h-${s}z`;
const line = (d, w = 1, c = '#e01010') => `<path d="${d}" fill="none" stroke="${c}" stroke-width="${w}"/>`;

// ball grid, one list of column ranges per row
function closeup() {
    const grid = ['14-22', '4-22', '2-8,10-22', '2-8,10-22', '4-22', '', '4-8,10-22', '2-22', '2-22', '4-4,6-9,11-22',
        '1-8,11-22', '1-22', '1-22', '0-16,18-18,20-22', '0-14,18-18,20-22', '1-22', '2-22', '1-1,3-22', '2-22', '0-7,9-17,21-22', '0-3,5-5,7-22'];
    let d = '';
    grid.forEach((ranges, r) => ranges && ranges.split(',').forEach(p => {
        const [a, b] = p.split('-').map(Number);
        for (let c = a; c <= b; c++) if (c !== 19) d += sq(Math.round(654 + c * 10.7), Math.round(502 + r * 10.7), 4);
    }));
    for (const y of [319, 327]) for (const x of [816, 827, 838, 850, 864, 875, 891]) d += sq(x, y, 4);
    for (const y of [351, 362, 373, 384, 394, 405, 415, 426, 437, 448, 481, 492])
        for (const x of [809, 819, 830, 841, 852, 873, 884, 894]) if (y > 355 || x < 860) d += sq(x, y, 4);
    const loose = [[460, 526], [460, 533], [492, 528], [511, 528], [538, 518], [538, 526], [538, 535], [595, 520], [459, 559], [459, 573],
        [508, 573], [518, 573], [547, 549], [554, 545], [554, 552], [552, 560], [558, 565], [566, 565], [556, 575], [564, 575], [564, 582],
        [564, 590], [566, 598], [575, 598], [585, 544], [595, 545], [585, 553], [595, 554], [585, 562], [595, 560], [593, 589], [585, 596],
        [594, 596], [526, 591], [534, 591], [435, 603], [445, 604], [469, 605], [483, 605], [492, 605], [514, 605], [462, 612], [480, 629],
        [448, 637], [525, 633], [561, 633], [569, 633], [577, 633], [587, 631], [561, 651], [570, 651], [578, 651], [587, 651], [562, 665],
        [571, 665], [578, 665], [587, 665], [527, 651], [517, 657], [519, 668], [503, 669], [445, 684], [451, 696], [445, 706], [449, 715],
        [508, 684], [523, 687], [563, 684], [579, 683], [587, 683], [561, 696], [580, 696], [588, 696], [508, 706], [516, 706], [525, 706],
        [561, 713], [570, 713], [578, 713], [588, 713], [525, 722], [623, 566], [628, 572], [630, 623], [627, 635], [641, 635], [653, 672],
        [838, 292], [848, 292], [891, 292], [858, 338], [849, 463], [849, 472], [867, 462], [867, 470]];
    loose.forEach(([x, y]) => d += sq(x - 2, y - 2, 4));
    let out = `<path d="${d}" fill="#f00" fill-opacity=".88"/>`;
    [[429, 581, 5], [484, 581, 5], [634, 595, 5], [620, 663, 5], [851, 257, 3], [852, 269, 3], [880, 267, 6]]
        .forEach(([x, y, r]) => out += `<circle cx="${x}" cy="${y}" r="${r}" fill="#f00"/>`);
    out += line('M403 541h137l5-6h15l4 5v21M403 545h140l5-6h10l3 4v20', 1);
    // bundle of routed pairs
    const pairs = ['M612 514v20l49 50h53l4 5', 'M614 514v18l48 49h51l5 5v4', 'M623 514v16l45 44h64l4 5v9l-4 4', 'M625 514v15l44 43h64',
        'M633 514v11l38 38h72l4 5v32', 'M635 514v10l38 37h70', 'M653 514v13l28 27h66l9 8v41l-3 3h-14l-7-8h-6', 'M655 514v12l27 26h65l11 9v43l-4 4h-16'];
    pairs.forEach(p => out += line(p));
    out += line('M403 645h125l7 6v15l23 25h17l5 6M403 677h130l24 25h40l11-11h95l2 14M403 691h104l1 2h31l15 14h52l5-5h83M403 722h58l10-9h67l8 7h55l7-7h76l3-4M484 728l9-11h42l6 6h120l5-3');
    out += line('M818 243v31l-13 13', 1) + line('M805 380h52l6 6v65l-6 7v15l6 7v40M857 380h6l4 6v67l-6 6v12l6 6v43', 1);
    out += line('M857 520v208M861 520v208', 1.500);
    out += line('M805 379.500h52', 2, '#ddd') + line('M806 404h8l5 4v5h-4M805 454l5 6v268', 1, '#3cc8c8') + line('M812 462v266', 2, '#eee');
    return out;
}

// scattered via field on a staggered lattice
function field(x, y, w, h, density) {
    let d = '';
    for (let j = 0; j < h; j += 4)
        for (let i = (j / 4) % 2 ? 4 : 0; i < w; i += 8)
            if (rnd() < density) d += sq(x + i, y + j, 2);
    return d;
}

function board() {
    const fields = [[979, 209, 22, 40, .5], [1021, 225, 18, 40, .5], [953, 252, 30, 10, .4], [993, 262, 45, 30, .5], [992, 282, 16, 36, .8],
        [930, 265, 25, 60, .15], [944, 295, 100, 60, .1], [1045, 385, 14, 58, .55], [1028, 462, 22, 56, .5], [1168, 392, 40, 60, .2],
        [1178, 436, 36, 24, .55], [1168, 462, 16, 46, .6], [1200, 462, 14, 46, .5], [1160, 515, 44, 22, .4], [1030, 542, 24, 22, .6],
        [1056, 551, 60, 8, .7], [986, 562, 120, 4, .9], [1090, 548, 50, 28, .45], [1176, 516, 28, 60, .45], [1196, 560, 10, 90, .3],
        [926, 532, 60, 50, .12], [972, 588, 20, 70, .5], [922, 651, 280, 5, .6], [936, 657, 60, 18, .4], [1006, 660, 50, 14, .4],
        [1072, 664, 72, 10, .75], [1150, 660, 54, 14, .5]];
    let d = fields.map(f => field(...f)).join('');
    let out = `<path d="${d}" fill="#f01010" fill-opacity=".85"/>`;
    out += line('M922 189h240M922 693h299', 4);
    out += line('M922 222l4 3v28M944 220l7 2v27l-11 6h-13l-3 4v95M922 251h18l6-5v-25M928 256v58l-3 4v30', 2);
    out += line('M958 305v50l-7 8v30M929 356l10 10 5 12v20M932 358l6 14 3 6-2 26M922 425h17l3 3v9l-6-4h-14', 1.500);
    out += line('M922 497h36l11-12v-75l-1-31M922 492h33l9-8v-12', 2);
    out += line('M953 379h15M957 379c-4 4 0 5-3 8v14l3 4v62', 1.500, '#2ed8e0');
    // loose traces left of the harness
    out += line('M991 443l-2 45 5 26M999 465l5 22 7 14-2 20 10 14 3 6M975 500l-2 18 4 3h22M1039 390l-9 12h-25l-3 12M1024 408l10 12 2 12 8 24', 1);
    out += line('M928 536l6 3v60M961 531v10l5 6v24M936 590v15l-8 10v20l-6 8M929 612v22', 1.200);
    // thick harness towards the connectors
    let h = '';
    for (let i = 0; i < 8; i++) h += `M${1014 + i * 2} ${424 + i * 3}l3 ${18 - i}l${30 - i} ${30 + i}`;
    out += line(h, 1);
    out += '<path d="M1048 458l4-6 8 4v54l7 9h46l12-13h20l-1 7h-15l-9 8h-62l-11-12z" fill="#f00"/>';
    out += line('M1014 421l8-4 9 5 1 12 21 17 7 8M1013 421v22l6 6 30 30', 2);
    out += line('M1022 440l28 22M1020 444l29 26M1030 436l-3 8M1040 444l-4 12', 1.500);
    for (const x of [1077, 1132]) {
        for (const y of [386, 464]) {
            let c = '';
            for (let i = 0; i < 8; i++) c += `M${x + i * 2 + 1} ${y + (i % 2)}v${38 + (i % 3) * 3}`;
            out += line(c, 1.200);
            // pads and fan-out on the left edge
            out += line(`M${x - 2} ${y + 1}h20M${x - 2} ${y + 5}l-3 5v6l-3 4 4 3v9l3 3v6M${x - 7} ${y + 20}h6M${x - 4} ${y + 24}h24M${x + 10} ${y + 20}h10M${x} ${y + 38}h17M${x - 2} ${y + 42}h6`, 1.500);
            out += line(`M${x + 2} ${y + 22}h6M${x + 9} ${y + 40}h8`, 4);
        }
        out += line(`M${x + 4} 380v6M${x + 10} 380v6M${x + 4} 428v36M${x + 9} 428v36M${x + 13} 428v36`, 1.300);
        out += line(`M${x + 3} 447h12`, 6);
    }
    out += line('M1172 380l-16 15v135l-8 3M1169 380l-15 16v46l3 4v78l-5 6M1100 520l12-9h33M1105 521l10-7h30', 1.500);
    out += line('M1000 521h15l14 15h76l6-7h32l7-9v-30M1007 508l22 28h74l7-7h26l11-12', 1.200);
    out += line('M1124 550l-8 10v17M1125 565l-4 12M1183 534v40M1190 534l4 6v38M1187 536v40M1187 664l-12 8', 1.500);
    return out;
}
$('closeup').innerHTML = closeup();
$('board').innerHTML = board();
```
